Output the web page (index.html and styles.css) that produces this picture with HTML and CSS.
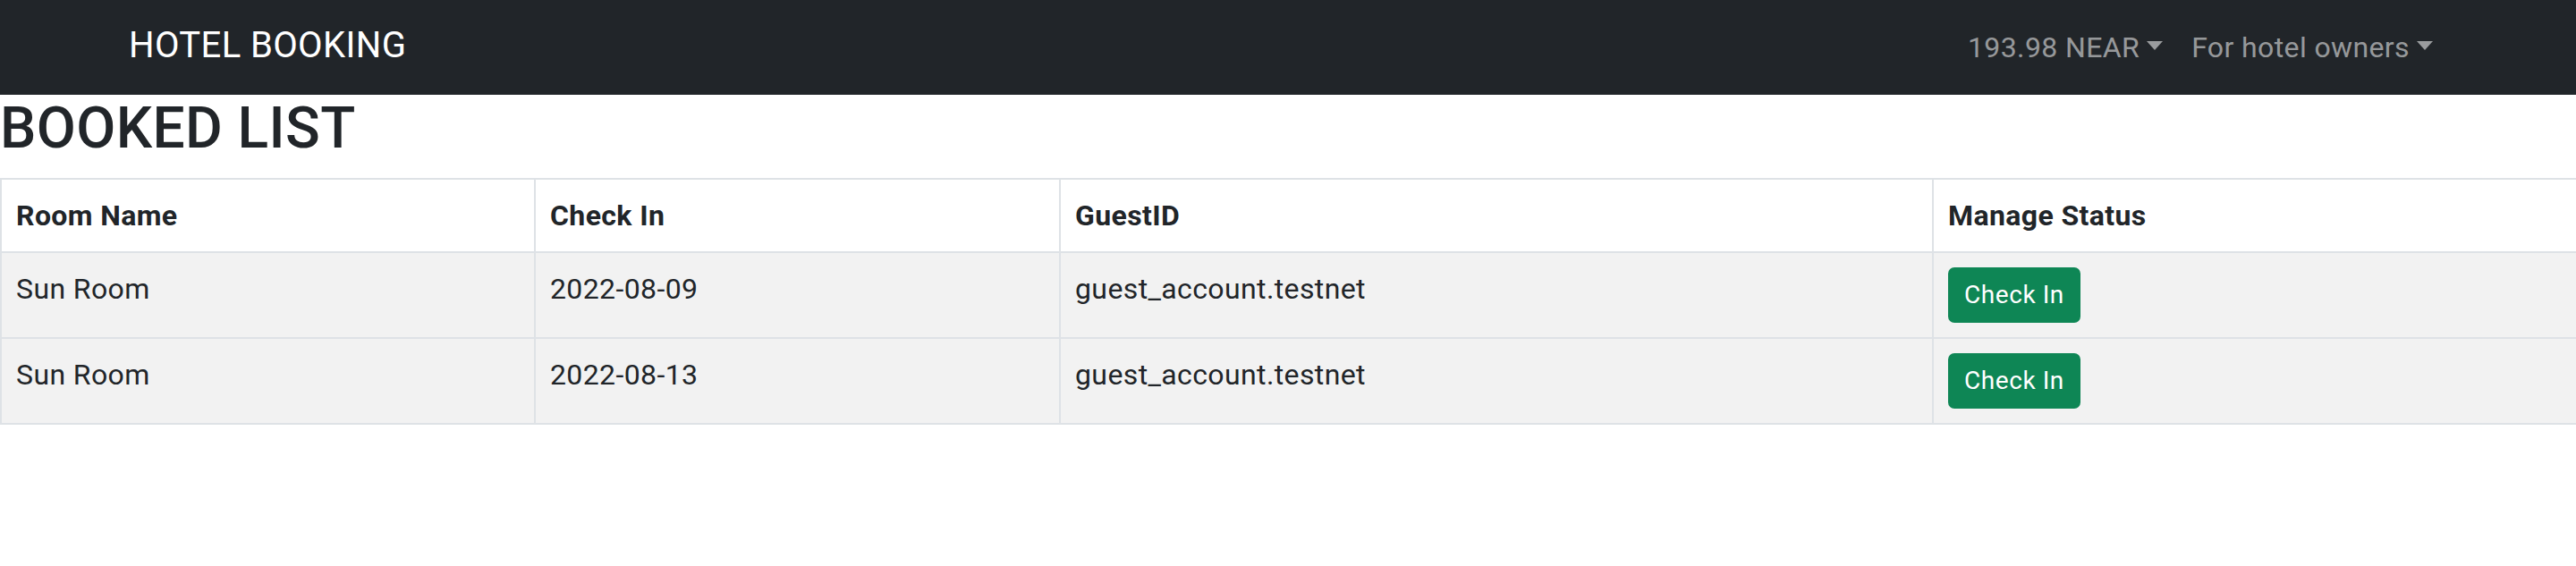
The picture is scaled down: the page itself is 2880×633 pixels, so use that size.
FILE: index.html
```html
<!DOCTYPE html>
<html lang="en">
<head>
<meta charset="utf-8">
<title>Hotel Booking</title>
<link rel="stylesheet" href="styles.css">
</head>
<body>
<nav class="navbar">
  <div class="nav-container">
    <a class="brand" href="#">HOTEL BOOKING</a>
    <ul class="nav-links">
      <li><a class="nav-link dropdown-toggle" href="#">193.98 NEAR</a></li>
      <li><a class="nav-link dropdown-toggle" href="#">For hotel owners</a></li>
    </ul>
  </div>
</nav>
<h2 class="page-title">BOOKED LIST</h2>
<table class="booked-table">
  <colgroup>
    <col class="col-room">
    <col class="col-checkin">
    <col class="col-guest">
    <col class="col-status">
  </colgroup>
  <thead>
    <tr>
      <th>Room Name</th>
      <th>Check In</th>
      <th>GuestID</th>
      <th>Manage Status</th>
    </tr>
  </thead>
  <tbody>
    <tr>
      <td>Sun Room</td>
      <td>2022-08-09</td>
      <td>guest_account.testnet</td>
      <td><button class="btn-success" type="button">Check In</button></td>
    </tr>
    <tr>
      <td>Sun Room</td>
      <td>2022-08-13</td>
      <td>guest_account.testnet</td>
      <td><button class="btn-success" type="button">Check In</button></td>
    </tr>
  </tbody>
</table>
</body>
</html>
```
FILE: styles.css
```css
* { box-sizing: border-box; }

html, body {
  margin: 0;
  padding: 0;
  background: #ffffff;
}

body {
  font-family: Roboto, "Liberation Sans", Arial, sans-serif;
  font-size: 32px;
  line-height: 1.5;
  color: #212529;
  letter-spacing: 0.012em;
}

.navbar {
  background: #212529;
  height: 106px;
  display: flex;
  align-items: center;
}

.nav-container {
  width: 2640px;
  margin: 0 auto;
  padding: 0 24px;
  display: flex;
  align-items: center;
  justify-content: space-between;
}

.brand {
  color: #ffffff;
  text-decoration: none;
  font-size: 40px;
  line-height: 60px;
  padding: 0;
  margin-top: -4px;
}

.nav-links {
  list-style: none;
  margin: 0;
  padding: 0;
  display: flex;
  align-items: center;
}

.nav-link {
  display: block;
  color: rgba(255, 255, 255, 0.55);
  text-decoration: none;
  padding: 16px 16px;
  line-height: 48px;
}

.dropdown-toggle::after {
  content: "";
  display: inline-block;
  margin-left: 8px;
  vertical-align: 8px;
  border-top: 10px solid;
  border-right: 9px solid transparent;
  border-left: 9px solid transparent;
  border-bottom: 0;
}

.page-title {
  margin: 0 0 16px 0;
  font-size: 64px;
  font-weight: 500;
  line-height: 1.2;
}

.booked-table {
  width: 2880px;
  border-collapse: collapse;
  table-layout: fixed;
}

.col-room { width: 597px; }
.col-checkin { width: 587px; }
.col-guest { width: 976px; }
.col-status { width: 720px; }

.booked-table th,
.booked-table td {
  border: 2px solid #dee2e6;
  padding: 16px;
  text-align: left;
  vertical-align: top;
  line-height: 48px;
}

.booked-table th {
  font-weight: 700;
  background: #ffffff;
}

.booked-table tbody td {
  background: #f2f2f2;
}

.btn-success {
  font-family: inherit;
  font-size: 28px;
  line-height: 42px;
  letter-spacing: 0.02em;
  color: #ffffff;
  background: #0e8655;
  border: 2px solid #0e8655;
  border-radius: 7px;
  padding: 8px 16px;
  cursor: pointer;
  vertical-align: top;
}
```
